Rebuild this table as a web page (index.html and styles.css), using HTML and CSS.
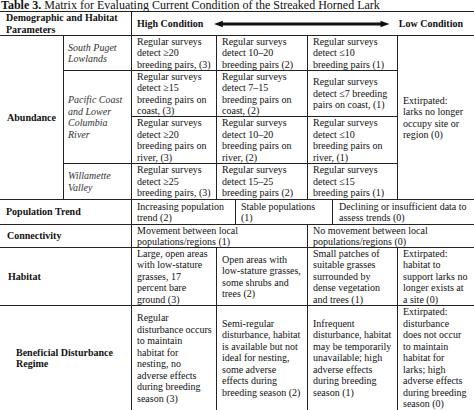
FILE: index.html
```html
<!DOCTYPE html>
<html>
<head>
<meta charset="utf-8">
<link rel="stylesheet" href="styles.css">
</head>
<body>
<div class="title"><b>Table 3.</b> Matrix for Evaluating Current Condition of the Streaked Horned Lark</div>
<div class="matrix">
  <div class="cell head span-label">Demographic and Habitat<br>Parameters</div>
  <div class="cell head scale">
    <span>High Condition</span>
    <svg class="arrow" viewBox="0 0 178 8" preserveAspectRatio="none" aria-hidden="true">
      <polygon points="0,4 9,0.8 9,2.4 169,2.4 169,0.8 178,4 169,7.2 169,5.6 9,5.6 9,7.2" fill="#111"/>
    </svg>
    <span>Low Condition</span>
  </div>

  <div class="cell label abundance">Abundance</div>

  <div class="cell sub r2">South Puget<br>Lowlands</div>
  <div class="cell c-high r2">Regular surveys<br>detect ≥20<br>breeding pairs, (3)</div>
  <div class="cell c-mid r2">Regular surveys<br>detect 10–20<br>breeding pairs (2)</div>
  <div class="cell c-low r2">Regular surveys<br>detect ≤10<br>breeding pairs (1)</div>
  <div class="cell c-none abund-none">Extirpated:<br>larks no longer<br>occupy site or<br>region (0)</div>

  <div class="cell sub pacific">Pacific Coast<br>and Lower<br>Columbia<br>River</div>
  <div class="cell c-high r3">Regular surveys<br>detect ≥15<br>breeding pairs on<br>coast, (3)</div>
  <div class="cell c-mid r3">Regular surveys<br>detect 7–15<br>breeding pairs on<br>coast, (2)</div>
  <div class="cell c-low r3">Regular surveys<br>detect ≤7 breeding<br>pairs on coast, (1)</div>

  <div class="cell c-high r4">Regular surveys<br>detect ≥20<br>breeding pairs on<br>river, (3)</div>
  <div class="cell c-mid r4">Regular surveys<br>detect 10–20<br>breeding pairs on<br>river, (2)</div>
  <div class="cell c-low r4">Regular surveys<br>detect ≤10<br>breeding pairs on<br>river, (1)</div>

  <div class="cell sub r5">Willamette<br>Valley</div>
  <div class="cell c-high r5">Regular surveys<br>detect ≥25<br>breeding pairs, (3)</div>
  <div class="cell c-mid r5">Regular surveys<br>detect 15–25<br>breeding pairs (2)</div>
  <div class="cell c-low r5">Regular surveys<br>detect ≤15<br>breeding pairs (1)</div>

  <div class="cell label span-label">Population Trend</div>
  <div class="cell trend-a">Increasing population<br>trend (2)</div>
  <div class="cell trend-b">Stable populations<br>(1)</div>
  <div class="cell trend-c">Declining or insufficient data to<br>assess trends (0)</div>

  <div class="cell label span-label conn-label">Connectivity</div>
  <div class="cell conn-a">Movement between local<br>populations/regions (1)</div>
  <div class="cell conn-b">No movement between local<br>populations/regions (0)</div>

  <div class="cell label span-label habitat-label">Habitat</div>
  <div class="cell c-high">Large, open areas<br>with low-stature<br>grasses, 17<br>percent bare<br>ground (3)</div>
  <div class="cell c-mid">Open areas with<br>low-stature grasses,<br>some shrubs and<br>trees (2)</div>
  <div class="cell c-low">Small patches of<br>suitable grasses<br>surrounded by<br>dense vegetation<br>and trees (1)</div>
  <div class="cell c-none">Extirpated:<br>habitat to<br>support larks no<br>longer exists at<br>a site (0)</div>

  <div class="cell label span-label dist-label">Beneficial Disturbance<br>Regime</div>
  <div class="cell c-high">Regular<br>disturbance occurs<br>to maintain<br>habitat for<br>nesting, no<br>adverse effects<br>during breeding<br>season (3)</div>
  <div class="cell c-mid">Semi-regular<br>disturbance, habitat<br>is available but not<br>ideal for nesting,<br>some adverse<br>effects during<br>breeding season (2)</div>
  <div class="cell c-low">Infrequent<br>disturbance, habitat<br>may be temporarily<br>unavailable; high<br>adverse effects<br>during breeding<br>season (1)</div>
  <div class="cell c-none">Extirpated:<br>disturbance<br>does not occur<br>to maintain<br>habitat for<br>larks; high<br>adverse effects<br>during breeding<br>season (0)</div>
</div>
</body>
</html>
```

FILE: styles.css
```css
html, body {
  margin: 0;
  padding: 0;
  background: #fff;
  overflow: hidden;
}

body {
  width: 474px;
  font-family: "Liberation Serif", "Times New Roman", serif;
  color: #111;
}

.title {
  height: 11px;
  line-height: 11px;
  font-size: 12px;
  padding-left: 1px;
  white-space: nowrap;
}

.title b {
  font-weight: bold;
}

.matrix {
  display: grid;
  grid-template-columns: 63px 67px 84px 18px 71px 24px 64px 76px;
  grid-template-rows: 23px 34px 45px 46px 35px 24px 22px 57px 104px;
  gap: 1px;
  background: #222;
  border-top: 1px solid #222;
  width: 474px;
}

.cell {
  background: #fff;
  display: flex;
  flex-direction: column;
  justify-content: center;
  padding: 0 2px 0 5px;
  font-size: 10px;
  line-height: 11.5px;
  white-space: nowrap;
  overflow: visible;
}

.head {
  font-weight: bold;
}

.span-label {
  grid-column: 1 / 3;
  padding-left: 6px;
}

.scale {
  grid-column: 3 / 9;
  flex-direction: row;
  align-items: center;
  justify-content: flex-start;
  padding: 0 11px 0 5px;
}

.arrow {
  flex: 1;
  height: 8px;
  margin: 0 9px 0 11px;
}

.label {
  font-weight: bold;
}

.abundance {
  grid-column: 1;
  grid-row: 2 / 6;
  align-items: center;
  padding: 0;
}

.sub {
  grid-column: 2;
  font-style: italic;
  color: #333;
  padding-left: 4px;
}

.pacific {
  grid-row: 3 / 5;
}

.r2 { grid-row: 2; }
.r3 { grid-row: 3; }
.r4 { grid-row: 4; }
.r5 { grid-row: 5; }

.c-high { grid-column: 3; }
.c-mid { grid-column: 4 / 6; }
.c-low { grid-column: 6 / 8; }
.c-none { grid-column: 8; }

.abund-none {
  grid-row: 2 / 6;
}

.trend-a { grid-column: 3 / 5; }
.trend-b { grid-column: 5 / 7; }
.trend-c { grid-column: 7 / 9; padding-left: 6px; }

.conn-label { padding-left: 7px; }
.conn-a { grid-column: 3 / 6; }
.conn-b { grid-column: 6 / 9; }

.habitat-label { padding-left: 8px; }
.dist-label { padding-left: 16px; }
```
